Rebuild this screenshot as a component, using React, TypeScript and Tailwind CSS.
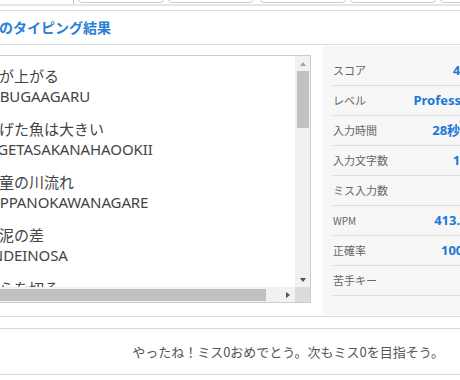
import React from "react";

const lines = [
  { jp: "株が上がる", ro: "KABUGAAGARU" },
  { jp: "逃げた魚は大きい", ro: "NIGETASAKANAHAOOKII" },
  { jp: "河童の川流れ", ro: "KAPPANOKAWANAGARE" },
  { jp: "雲泥の差", ro: "UNDEINOSA" },
  { jp: "しらを切る", ro: "SHIRAWOKIRU" },
];

const stats = [
  { label: "スコア", value: "426" },
  { label: "レベル", value: "Professor" },
  { label: "入力時間", value: "28秒00" },
  { label: "入力文字数", value: "193" },
  { label: "ミス入力数", value: "0" },
  { label: "WPM", value: "413.57", small: true },
  { label: "正確率", value: "100%" },
  { label: "苦手キー", value: "" },
];

export default function App() {
  return (
    <div className="w-[460px] h-[380px] overflow-hidden bg-white font-['Noto_Sans','Noto_Sans_CJK_JP',sans-serif] text-[#333]">
      {/* top tabs (bottom edges visible) */}
      <div className="h-[4px] overflow-hidden flex">
        <div className="w-[74px] shrink-0 flex justify-end">
          <div className="w-[1px] h-[4px] bg-[#9cc3ea]" />
        </div>
        <div className="ml-[4px] w-[86px] shrink-0 h-[14px] -mt-[11px] border border-[#cfcfcf] rounded-b-[4px] bg-white" />
        <div className="ml-[4px] w-[86px] shrink-0 h-[14px] -mt-[11px] border border-[#cfcfcf] rounded-b-[4px] bg-white" />
        <div className="ml-[6px] w-[86px] shrink-0 h-[14px] -mt-[11px] border border-[#cfcfcf] rounded-b-[4px] bg-white" />
        <div className="ml-[4px] w-[86px] shrink-0 h-[14px] -mt-[11px] border border-[#cfcfcf] rounded-b-[4px] bg-white" />
        <div className="ml-[4px] w-[86px] shrink-0 h-[14px] -mt-[11px] border border-[#cfcfcf] rounded-b-[4px] bg-white" />
      </div>
      <div className="h-[2px] bg-[#e6e6e6]" />
      <div className="h-[4px]" />

      {/* header */}
      <div className="h-[35px] border-t border-b border-[#dcdcdc] flex items-center overflow-hidden">
        <div className="-ml-[57px] -mt-[2px] text-[14px] leading-[20px] font-bold text-[#2a7fd6] whitespace-nowrap font-['Noto_Sans_CJK_JP',sans-serif]">
          ことわざのタイピング結果
        </div>
      </div>

      {/* body */}
      <div className="h-[271px] flex -ml-[24px]">
        <div className="w-[335px] shrink-0 pt-[10px]">
          <div className="h-[248px] border border-[#cccccc] flex flex-col">
            <div className="flex-1 flex min-h-0">
              <div className="flex-1 overflow-hidden pl-[7px] pt-[9px]">
                {lines.map((l, i) => (
                  <div key={i} className="mb-[11px] whitespace-nowrap text-[15px] text-[#444]">
                    <div className="leading-[21px] font-['Noto_Sans_CJK_JP',sans-serif]">{l.jp}</div>
                    <div className="-ml-[3px] leading-[21px] tracking-[-0.1px]">{l.ro}</div>
                  </div>
                ))}
              </div>
              {/* vertical scrollbar */}
              <div className="w-[15px] shrink-0 bg-[#f1f1f1] flex flex-col items-center">
                <div className="h-[15px] flex items-center justify-center">
                  <div className="w-0 h-0 border-l-[3.5px] border-r-[3.5px] border-b-[4px] border-l-transparent border-r-transparent border-b-[#a3a3a3]" />
                </div>
                <div className="w-[12px] h-[57px] bg-[#c1c1c1]" />
                <div className="flex-1" />
                <div className="h-[15px] flex items-center justify-center">
                  <div className="w-0 h-0 border-l-[3.5px] border-r-[3.5px] border-t-[4px] border-l-transparent border-r-transparent border-t-[#505050]" />
                </div>
              </div>
            </div>
            {/* horizontal scrollbar */}
            <div className="h-[15px] shrink-0 flex bg-[#f1f1f1]">
              <div className="flex-1 flex items-center">
                <div className="w-[289px] h-[12px] bg-[#c1c1c1]" />
                <div className="flex-1" />
                <div className="w-[15px] flex items-center justify-center">
                  <div className="w-0 h-0 border-t-[3.5px] border-b-[3.5px] border-l-[4px] border-t-transparent border-b-transparent border-l-[#505050]" />
                </div>
              </div>
              <div className="w-[15px] bg-[#dcdcdc]" />
            </div>
          </div>
        </div>

        {/* stats panel */}
        <div className="ml-[12px] mt-[1px] w-[160px] shrink-0 h-[269px] bg-[#f7f7f7] pl-[10px] pr-[8px] pt-[10px]">
          {stats.map((s, i) => (
            <div key={i} className="h-[30px] border-b border-[#dddddd] flex items-center justify-between whitespace-nowrap">
              <span className={`${s.small ? "text-[10px]" : "text-[11px]"} text-[#666] font-['Noto_Sans_CJK_JP',sans-serif]`}>
                {s.label}
              </span>
              <span className="text-[13px] font-bold text-[#1f78d6] font-['Noto_Sans','Noto_Sans_CJK_JP',sans-serif]">
                {s.value}
              </span>
            </div>
          ))}
        </div>
      </div>

      {/* footer */}
      <div className="border-t border-[#dddddd] h-[12px]" />
      <div className="border-t border-[#d8d8d8] h-[47px] border-b flex items-center justify-end pr-[16px]">
        <span className="text-[13px] leading-[18px] text-[#555] whitespace-nowrap font-['Noto_Sans_CJK_JP',sans-serif]">
          やったね！ミス0おめでとう。次もミス0を目指そう。
        </span>
      </div>
    </div>
  );
}
